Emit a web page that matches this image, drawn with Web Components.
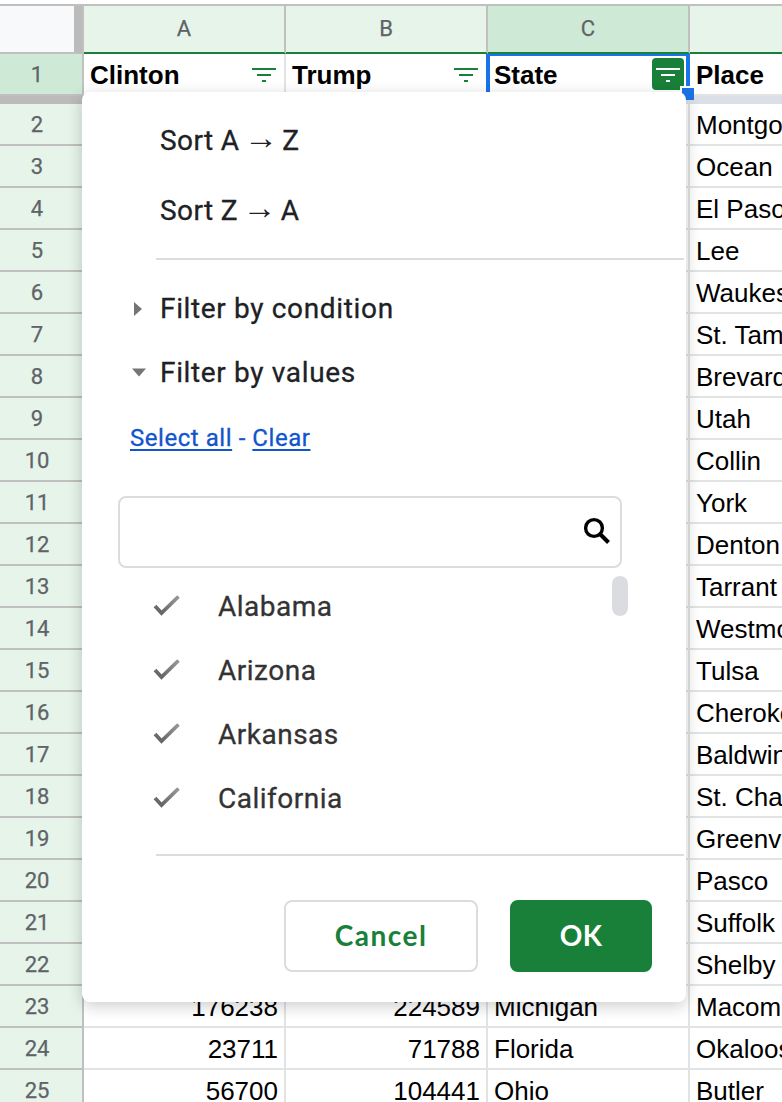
<!DOCTYPE html>
<html lang="en">
<head>
<meta charset="utf-8">
<title>Sheet filter</title>
<style>
html,body{margin:0;height:100%;overflow:hidden;background:#fff}
</style>
</head>
<body>
<sheet-app></sheet-app>
<script>
const define = (name, html, setup) => {
  const t = document.createElement('template');
  t.innerHTML = html;
  customElements.define(name, class extends HTMLElement {
    constructor() {
      super();
      this.attachShadow({mode: 'open'}).append(t.content.cloneNode(true));
    }
    connectedCallback() { if (setup) setup(this.shadowRoot, this); }
  });
};

define('col-head', `<style>
:host{display:block;box-sizing:border-box;height:48px;border-right:2px solid #c0c0c0;border-bottom:2px solid #188038;background:#e6f4ea;color:#5f6368;font:22px/45px Roboto,sans-serif;-webkit-text-stroke:.25px;text-align:center}
:host([selected]){background:#ceead6}
</style><slot></slot>`);

define('row-head', `<style>
:host{display:block;box-sizing:border-box;height:42px;width:84px;padding-right:8px;border-right:2px solid #c0c0c0;border-bottom:2px solid #c0c0c0;background:#e6f4ea;color:#5f6368;font:22px/42px Roboto,sans-serif;-webkit-text-stroke:.25px;text-align:center}
:host([selected]){background:#ceead6}
</style><slot></slot>`);

define('filter-icon', `<style>
:host{display:block;width:32px;height:32px;border-radius:4px;color:#188038}
:host([active]){background:#188038;color:#fff}
svg{display:block}
</style><svg width="32" height="32" fill="currentColor"><path d="M4 10h24v2H4zM9 16h14v2H9zM14 22h4v2h-4z"/></svg>`);

define('data-cell', `<style>
:host{display:flex;justify-content:space-between;box-sizing:border-box;height:42px;min-width:0;padding:0 6px;border-right:2px solid #e2e3e3;border-bottom:2px solid #e2e3e3;background:#fff;color:#000;font:26px/42px "Liberation Sans",Arial,sans-serif;white-space:nowrap}
:host([num]){justify-content:flex-end}
:host([bold]){font-weight:700}
:host([focus]){border-right-color:#1a73e8;box-shadow:-2px 0 #1a73e8,inset 2px 2px #1a73e8,inset -2px 0 #1a73e8}
::slotted(filter-icon){margin:4px -2px 0 0}
</style><slot></slot>`);

define('sheet-row', `<style>
:host{display:grid;grid-template-columns:84px 202px 202px 202px 202px}
</style><slot></slot>`);

define('sheet-corner', `<style>
:host{display:block;box-sizing:border-box;height:48px;background:#f8f9fa;border-right:8px solid #bbb;border-bottom:2px solid #c0c0c0;box-shadow:2px 0 #c0c0c0;margin-right:2px}
</style>`);

define('freeze-bar', `<style>
:host{display:grid;grid-template-columns:84px 1fr;height:8px}
i{background:#bbb}b{background:#dadfe8}
</style><i></i><b></b>`);

define('sheet-grid', `<style>
:host{display:block;border-top:2px solid #c0c0c0}
</style>
<sheet-row><sheet-corner></sheet-corner><col-head>A</col-head><col-head>B</col-head><col-head selected>C</col-head><col-head></col-head></sheet-row>
<sheet-row><row-head selected>1</row-head><data-cell bold>Clinton<filter-icon></filter-icon></data-cell><data-cell bold>Trump<filter-icon></filter-icon></data-cell><data-cell bold focus>State<filter-icon active></filter-icon></data-cell><data-cell bold>Place</data-cell></sheet-row>
<freeze-bar></freeze-bar>
<div id="rows"></div>`, root => {
  const places = ['Montgomery','Ocean','El Paso','Lee','Waukesha','St. Tammany','Brevard','Utah','Collin','York','Denton','Tarrant','Westmoreland','Tulsa','Cherokee','Baldwin','St. Charles','Greenville','Pasco','Suffolk','Shelby','Macomb','Okaloosa','Butler'];
  const votes = {23:['176238','224589','Michigan'],24:['23711','71788','Florida'],25:['56700','104441','Ohio']};
  root.getElementById('rows').innerHTML = places.map((p, i) => {
    const v = votes[i + 2] || ['', '', ''];
    return `<sheet-row><row-head>${i + 2}</row-head><data-cell num>${v[0]}</data-cell><data-cell num>${v[1]}</data-cell><data-cell>${v[2]}</data-cell><data-cell>${p}</data-cell></sheet-row>`;
  }).join('');
});

define('menu-item', `<style>
:host{display:block;height:70px;padding-left:78px;font:28px/72px Roboto,sans-serif;letter-spacing:.4px;-webkit-text-stroke:.3px;color:#202124;white-space:nowrap}
::slotted(span){font:34px/0 "Liberation Serif",serif;letter-spacing:0;margin:0 -3px;vertical-align:1.5px;-webkit-text-stroke:0}
</style><slot></slot>`);

define('menu-divider', `<style>
:host{display:block;height:2px;margin:0 2px 0 74px;background:#dadce0}
</style>`);

define('menu-section', `<style>
:host{display:flex;align-items:center;height:64px;padding-left:50px;font:28px/64px Roboto,sans-serif;letter-spacing:.65px;-webkit-text-stroke:.3px;color:#202124}
span{padding-top:2px}
svg{width:16px;height:16px;margin:2px 12px 0 0;fill:#757575}
.o{display:none}:host([open]) .o{display:block}:host([open]) .c{display:none}
</style><svg class="c"><path d="M2 1v14l8-7z"/></svg><svg class="o"><path d="M0 3.500h14l-7 8z"/></svg><span><slot></slot></span>`);

define('select-links', `<style>
:host{display:block;height:66px;padding-left:48px;font:24px/68px Roboto,sans-serif;letter-spacing:.55px;-webkit-text-stroke:.3px;color:#1155cc;white-space:nowrap}
a{text-decoration:underline;text-decoration-thickness:2px;text-underline-offset:3px}
</style><a>Select all</a> - <a>Clear</a>`);

define('search-box', `<style>
:host{display:flex;justify-content:flex-end;align-items:center;box-sizing:border-box;width:504px;height:72px;margin:26px 0 0 36px;padding:0 9px 2px 0;border:2px solid #dadce0;border-radius:8px}
</style><svg width="28" height="28" fill="none" stroke="#000"><circle cx="11" cy="11" r="8.4" stroke-width="3.400"/><path d="M17 17l8.500 8.500" stroke-width="4"/></svg>`);

define('check-item', `<style>
:host{display:flex;align-items:center;height:64px;padding-left:70px;font:28px/64px Roboto,sans-serif;letter-spacing:.5px;-webkit-text-stroke:.3px;color:#333}
span{padding-top:2px}
svg{width:30px;height:26px;margin-right:36px}
</style><svg fill="none" stroke-width="3.800"><defs><linearGradient id="g" x1="1" y1="0" x2=".3" y2="1"><stop stop-color="#999"/><stop offset="1" stop-color="#666"/></linearGradient></defs><path d="M3 13l6.500 7L26.500 3.500" stroke="url(#g)"/></svg><span><slot></slot></span>`);

define('value-list', `<style>
:host{display:flex;justify-content:space-between;margin-top:6px;padding-right:58px}
i{width:16px;height:40px;margin-top:2px;border-radius:8px;background:#dadce0}
</style><div><slot></slot></div><i></i>`);

define('menu-button', `<style>
:host{display:block;box-sizing:border-box;width:194px;height:72px;border:2px solid #dadce0;border-radius:8px;color:#188038;font:700 28px/66px Lato,sans-serif;letter-spacing:1.5px;text-align:center}
:host([primary]){width:142px;border-color:#188038;background:#188038;color:#fff;letter-spacing:.3px}
</style><slot></slot>`);

define('filter-menu', `<style>
:host{display:block;box-sizing:border-box;width:604px;height:910px;padding-top:13px;border-radius:8px;background:#fff;box-shadow:0 4px 16px rgba(0,0,0,.2)}
.gap{height:13px}.gap2{height:16px}.gap3{height:24px}
footer{display:flex;justify-content:flex-end;gap:32px;padding:44px 34px 0 0}
</style>
<menu-item>Sort A <span>→</span> Z</menu-item>
<menu-item>Sort Z <span>→</span> A</menu-item>
<div class="gap"></div><menu-divider></menu-divider><div class="gap2"></div>
<menu-section>Filter by condition</menu-section>
<menu-section open>Filter by values</menu-section>
<select-links></select-links>
<search-box></search-box>
<value-list><check-item>Alabama</check-item><check-item>Arizona</check-item><check-item>Arkansas</check-item><check-item>California</check-item></value-list>
<div class="gap3"></div><menu-divider></menu-divider>
<footer><menu-button>Cancel</menu-button><menu-button primary>OK</menu-button></footer>`);

define('sheet-app', `<style>
:host{display:block;position:relative;height:1102px;padding-top:4px;box-sizing:border-box;overflow:hidden;background:#fff}
.handle{position:absolute;left:682px;top:88px;width:12px;height:12px;background:#1a73e8;box-shadow:-2px -2px #fff}
filter-menu{position:absolute;left:82px;top:92px}
</style>
<sheet-grid></sheet-grid><div class="handle"></div><filter-menu></filter-menu>`);
</script>
</body>
</html>
